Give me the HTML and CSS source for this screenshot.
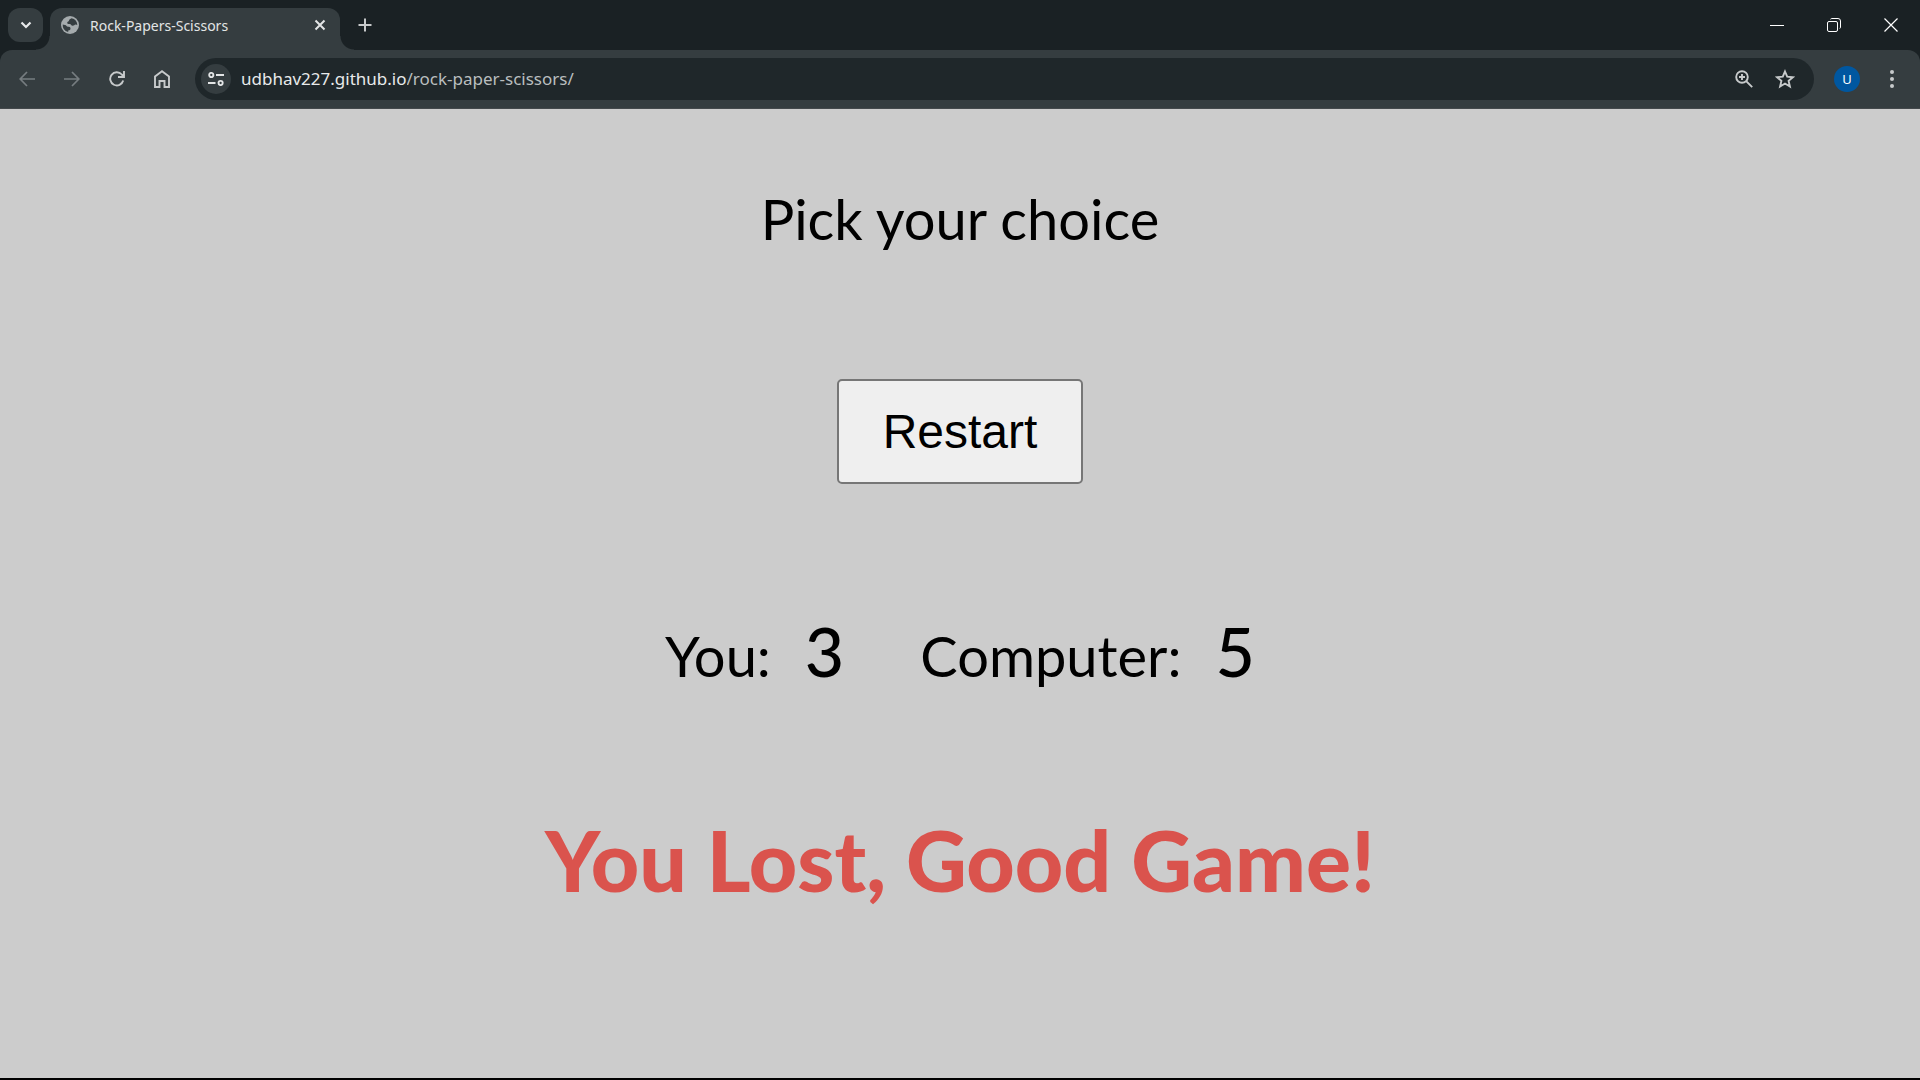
FILE: index.html
```html
<!DOCTYPE html>
<html lang="en">
<head>
<meta charset="utf-8">
<title>Rock-Papers-Scissors</title>
<link rel="stylesheet" href="styles.css">
</head>
<body>
<header class="browser">
  <div class="tabstrip">
    <button class="tab-search" aria-label="Search tabs"><svg width="12" height="8" viewBox="0 0 12 8"><path d="M1.5 1.5 6 6l4.500-4.500" fill="none" stroke="currentColor" stroke-width="2.200"/></svg></button>
    <div class="tab">
      <svg width="18" height="18" viewBox="0 0 18 18"><circle cx="9" cy="9" r="9" fill="#a5abad"/><path d="M10.500 2.200C9.500 3 8 3.200 8 4.500c0 1.200-1.800.8-1.800 2.300 0 1.300 1.200 1.200 2.500 1.200 1.600 0 1.400 1.800 2.900 1.800 1.700 0 1.700-1.300 3-1.300.8 0 1.100.4 1.700.5A7.300 7.300 0 0 0 10.500 2.200ZM1.700 8.500A7.300 7.300 0 0 0 7.200 16v-1.500c1.600 0 2.300-.7 2.300-2 0-1.500-1.300-1.700-2.500-1.700C5.500 10.800 5.500 9 4 9c-1 0-1.500-.2-2.300-.5Z" fill="#353d40"/></svg>
      <span class="tab-title">Rock-Papers-Scissors</span>
      <button class="icon-button" aria-label="Close tab"><svg width="12" height="12" viewBox="0 0 12 12"><path d="m1.500 1.500 9 9m0-9-9 9" stroke="currentColor" stroke-width="2"/></svg></button>
    </div>
    <button class="icon-button new-tab" aria-label="New tab"><svg width="14" height="14" viewBox="0 0 14 14"><path d="M7 .5v13M.5 7h13" stroke="currentColor" stroke-width="2"/></svg></button>
    <div class="window-controls">
      <button class="window-button" aria-label="Minimize"><svg width="14" height="14" viewBox="0 0 14 14"><path d="M0 7.500h14" stroke="currentColor"/></svg></button>
      <button class="window-button" aria-label="Restore"><svg width="14" height="14" viewBox="0 0 14 14" fill="none" stroke="currentColor"><rect x=".5" y="3.500" width="10" height="10" rx="1.500"/><path d="M3.500 1.200C4 .6 4.500.5 5 .5h6A2.500 2.500 0 0 1 13.500 3v6c0 .6-.2 1.200-.7 1.500"/></svg></button>
      <button class="window-button" aria-label="Close"><svg width="14" height="14" viewBox="0 0 14 14"><path d="m.5.5 13 13m0-13-13 13" stroke="currentColor" stroke-width="1.200"/></svg></button>
    </div>
  </div>
  <div class="toolbar">
    <nav class="nav-buttons" aria-label="Navigation">
      <button class="icon-button dim" aria-label="Back"><svg width="16" height="16" viewBox="0 0 16 16"><path d="M16 8H1.500M8 1 1.200 8 8 15" fill="none" stroke="currentColor" stroke-width="1.700"/></svg></button>
      <button class="icon-button dim" aria-label="Forward"><svg width="16" height="16" viewBox="0 0 16 16"><path d="M0 8h14.500M8 1l6.800 7L8 15" fill="none" stroke="currentColor" stroke-width="1.700"/></svg></button>
      <button class="icon-button" aria-label="Reload"><svg width="16" height="16" viewBox="0 0 16 16"><path d="M14.200 9.500A6.600 6.600 0 1 1 12.800 3.500l2 2M15 0v6H9" fill="none" stroke="currentColor" stroke-width="1.900"/></svg></button>
      <button class="icon-button" aria-label="Home"><svg width="16" height="18" viewBox="0 0 16 18"><path d="M1 17V6.500L8 1.200l7 5.300V17h-4.500v-6h-5v6Z" fill="none" stroke="currentColor" stroke-width="1.900"/></svg></button>
    </nav>
    <div class="omnibox">
      <button class="site-info" aria-label="View site information"><svg width="16" height="14" viewBox="0 0 16 14" fill="none" stroke="currentColor" stroke-width="1.900"><circle cx="3.300" cy="3" r="2.100"/><path d="M8 3h8M0 11h7.500"/><circle cx="12.600" cy="11" r="2.100"/></svg></button>
      <label class="host" for="path">udbhav227.github.io</label>
      <input class="path" id="path" type="text" value="/rock-paper-scissors/">
      <button class="icon-button" aria-label="Zoom"><svg width="18" height="18" viewBox="0 0 18 18" fill="none" stroke="currentColor" stroke-width="1.900"><circle cx="7" cy="7" r="5.800"/><path d="m11.200 11.200 6 6M7 4v6M4 7h6"/></svg></button>
      <button class="icon-button" aria-label="Bookmark this tab"><svg width="20" height="20" viewBox="0 0 20 20"><path d="m10 2.500 2.200 5.200 5.700.5-4.300 3.700 1.300 5.600L10 14.500l-4.900 3 1.300-5.600-4.300-3.700 5.700-.5Z" fill="none" stroke="currentColor" stroke-width="1.900"/></svg></button>
    </div>
    <button class="avatar" aria-label="Profile">U</button>
    <button class="icon-button" aria-label="Menu"><svg width="4" height="18" viewBox="0 0 4 18" fill="currentColor"><circle cx="2" cy="2" r="2"/><circle cx="2" cy="9" r="2"/><circle cx="2" cy="16" r="2"/></svg></button>
  </div>
</header>
<main class="game">
  <h1 class="prompt">Pick your choice</h1>
  <button class="restart">Restart</button>
  <div class="scores">
    <p class="score">You: <span class="points">3</span></p>
    <p class="score">Computer: <span class="points">5</span></p>
  </div>
  <p class="result">You Lost, Good Game!</p>
</main>
</body>
</html>
```
FILE: styles.css
```css
* {
  box-sizing: border-box;
}

body {
  margin: 0;
  min-height: 100vh;
  display: flex;
  flex-direction: column;
  background: #ccc;
  border-bottom: 2px solid #000;
  color: #000;
  font-family: "Gill Sans", "Gill Sans MT", Lato, sans-serif;
}

button {
  margin: 0;
  padding: 0;
  border: 0;
  background: none;
  color: inherit;
  font: inherit;
}

svg {
  display: block;
  flex: none;
}

.browser {
  background: #1a2124;
  color: #c7cacb;
  font-family: "Segoe UI", "Noto Sans", sans-serif;
}

.tabstrip {
  height: 50px;
  display: flex;
  align-items: flex-start;
  padding: 8px 0 0 8px;
}

.tab-search {
  width: 35px;
  height: 34px;
  display: grid;
  place-items: center;
  border-radius: 12px;
  background: #353d40;
  color: #e8eaeb;
}

.tab {
  position: relative;
  width: 290px;
  height: 42px;
  margin-left: 7px;
  padding: 0 8px 8px 11px;
  display: flex;
  align-items: center;
  gap: 11px;
  border-radius: 12px 12px 0 0;
  background: #353d40;
  color: #e3e5e6;
  font-size: 14px;
}

.tab::before,
.tab::after {
  content: "";
  position: absolute;
  bottom: 0;
  width: 14px;
  height: 14px;
}

.tab::before {
  right: 100%;
  background: radial-gradient(circle at 0 0, transparent 13px, #353d40 14px);
}

.tab::after {
  left: 100%;
  background: radial-gradient(circle at 100% 0, transparent 13px, #353d40 14px);
}

.tab-title {
  flex: 1;
  white-space: nowrap;
}

.icon-button {
  width: 24px;
  height: 34px;
  display: grid;
  place-items: center;
  flex: none;
}

.new-tab {
  margin-left: 13px;
}

.window-controls {
  display: flex;
  margin-left: auto;
  padding-right: 1px;
  color: #fff;
}

.window-button {
  width: 57px;
  height: 34px;
  display: grid;
  place-items: center;
}

.toolbar {
  height: 59px;
  display: flex;
  align-items: center;
  padding: 0 16px 1px 15px;
  border-bottom: 1px solid #44494c;
  border-radius: 12px 12px 0 0;
  background: #353d40;
}

.nav-buttons {
  display: flex;
  gap: 21px;
}

.dim {
  color: #767d80;
}

.omnibox {
  flex: 1;
  height: 42px;
  margin: 0 20px 0 21px;
  padding: 0 17px 0 6px;
  display: flex;
  align-items: center;
  gap: 17px;
  border-radius: 21px;
  background: #1f272a;
  font-size: 17px;
}

.site-info {
  width: 30px;
  height: 30px;
  display: grid;
  place-items: center;
  border-radius: 50%;
  background: #353d40;
  color: #e3e5e6;
}

.host {
  margin-right: -17px;
  margin-left: -7px;
  color: #e8eaeb;
}

.path {
  flex: 1;
  min-width: 0;
  padding: 0;
  border: 0;
  outline: 0;
  background: none;
  color: #b9bebf;
  font: inherit;
}

.avatar {
  width: 26px;
  height: 26px;
  margin-right: 20px;
  border-radius: 50%;
  background: #0057a0;
  color: #fff;
  font-size: 13px;
  line-height: 26px;
}

.game {
  flex: 1;
  display: flex;
  flex-direction: column;
  align-items: center;
  padding: 70px 20px;
}

.prompt {
  margin: 0;
  font-size: 56px;
  font-weight: 400;
  line-height: 80px;
}

.restart {
  margin-top: 120px;
  height: 105px;
  padding: 0 44px;
  border: 2px solid #767676;
  border-radius: 5px;
  background: #efefef;
  font-family: Arial, "Liberation Sans", sans-serif;
  font-size: 48px;
}

.scores {
  display: flex;
  gap: 76px;
  margin-top: 117px;
}

.score {
  display: flex;
  align-items: baseline;
  gap: 34px;
  margin: 0;
  font-size: 56px;
  line-height: 100px;
}

.points {
  font-size: 68px;
  font-weight: 500;
}

.result {
  margin: 104px 0 0;
  color: #da534d;
  font-size: 84px;
  font-weight: 900;
  line-height: 100px;
}
```
